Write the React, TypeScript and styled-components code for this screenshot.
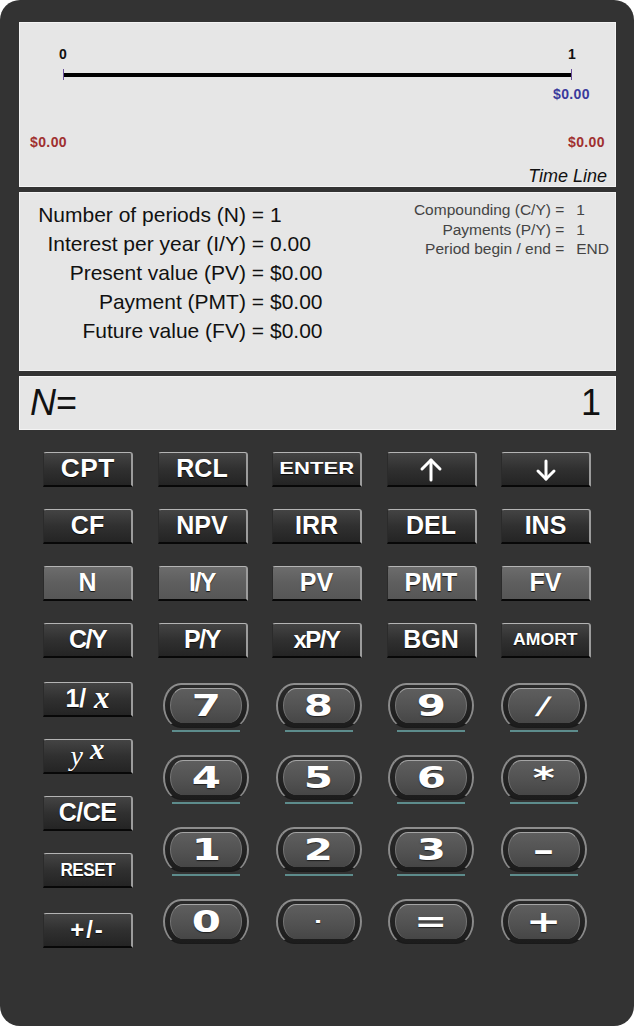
import React from 'react';
import styled, { createGlobalStyle } from 'styled-components';

const GlobalStyle = createGlobalStyle`
  html, body {
    margin: 0;
    padding: 0;
    background: #ffffff;
  }
  body {
    font-family: "Liberation Sans", Arial, sans-serif;
  }
`;

const Calculator = styled.div`
  width: 634px;
  height: 1026px;
  box-sizing: border-box;
  background: #333333;
  border-radius: 20px;
  padding: 22px 18px 0 19px;
  display: flex;
  flex-direction: column;
`;

const Screen = styled.div`
  display: flex;
  flex-direction: column;
  gap: 5px;
`;

const Panel = styled.div<{ $height: number }>`
  height: ${(p) => p.$height}px;
  box-sizing: border-box;
  background: #e6e6e6;
  border: 1px solid #f4f4f4;
  color: #111111;
`;

/* ---------- time line ---------- */

const TimelinePanel = styled(Panel)`
  display: flex;
  flex-direction: column;
`;

const TickRow = styled.div`
  display: flex;
  justify-content: space-between;
  width: 517px;
  margin: 24px 0 0 39px;
  font-size: 14px;
  line-height: 15px;
  font-weight: bold;
`;

const Tick = styled.span`
  width: 8px;
  text-align: center;
`;

const Axis = styled.div`
  position: relative;
  width: 509px;
  height: 4px;
  margin: 11px 0 0 43px;
  background: #000000;

  &::before,
  &::after {
    content: '';
    position: absolute;
    top: -4px;
    width: 1px;
    height: 11px;
    background: #6a4f9c;
  }
  &::before {
    left: 0;
  }
  &::after {
    right: 0;
  }
`;

const Amount = styled.span<{ $color: string }>`
  color: ${(p) => p.$color};
  font-size: 14px;
  line-height: 14px;
  font-weight: bold;
  letter-spacing: 0.4px;
`;

const FlowAmount = styled(Amount)`
  align-self: flex-end;
  margin: 10px 25px 0 0;
`;

const CashRow = styled.div`
  display: flex;
  justify-content: space-between;
  margin: 34px 10px 0 10px;
`;

const TimelineTitle = styled.div`
  align-self: flex-end;
  margin: 18px 8px 0 0;
  font-size: 18px;
  line-height: 18px;
  font-style: italic;
`;

/* ---------- values ---------- */

const InfoPanel = styled(Panel)`
  display: flex;
  justify-content: space-between;
  align-items: flex-start;
`;

const MainTable = styled.div`
  display: grid;
  grid-template-columns: 244px auto;
  padding-top: 7px;
  font-size: 21px;
  line-height: 29px;
  white-space: nowrap;
`;

const MainLabel = styled.span`
  text-align: right;
`;

const MainValue = styled.span`
  padding-left: 6px;
`;

const SideTable = styled.div`
  display: grid;
  grid-template-columns: auto auto;
  column-gap: 12px;
  margin: 7px 6px 0 0;
  font-size: 15.5px;
  line-height: 19.5px;
  color: #444444;
  white-space: nowrap;
`;

const SideLabel = styled.span`
  text-align: right;
`;

/* ---------- entry display ---------- */

const EntryPanel = styled(Panel)`
  display: flex;
  align-items: center;
  justify-content: space-between;
  padding: 0 14px 0 10px;
  font-size: 36px;
  line-height: 36px;
`;

const Variable = styled.span`
  font-style: italic;
`;

/* ---------- keys ---------- */

const Keypad = styled.div`
  margin-top: 22px;
  padding-left: 24px;
  display: flex;
  flex-direction: column;
  gap: 24px;
`;

const FunctionGrid = styled.div`
  display: grid;
  grid-template-columns: repeat(5, 90px);
  grid-auto-rows: 35px;
  column-gap: 24.5px;
  row-gap: 22px;
`;

const LowerArea = styled.div`
  display: flex;
  align-items: flex-start;
  gap: 30px;
`;

const SideColumn = styled.div`
  display: flex;
  flex-direction: column;
  gap: 22px;

  & > :last-child {
    margin-top: 3px;
  }
`;

const FuncKey = styled.button<{ $light?: boolean }>`
  width: 90px;
  height: 35px;
  box-sizing: border-box;
  padding: 0 0 1px;
  margin: 0;
  border-style: solid;
  border-width: 1px 2px 2px 1px;
  border-color: #b4b4b4 #9c9c9c #080808 #2b2b2b;
  border-radius: 3px 3px 0 0;
  background: ${(p) =>
    p.$light
      ? 'linear-gradient(#6c6c6c, #5e5e5e 50%, #565656)'
      : 'linear-gradient(#444444, #303030 50%, #242424)'};
  color: #ffffff;
  display: flex;
  align-items: center;
  justify-content: center;
  font-family: "Liberation Sans", Arial, sans-serif;
  font-weight: bold;
  text-shadow: 0 1px 1px rgba(0, 0, 0, 0.8);
  cursor: pointer;
`;

const KeyText = styled.span<{ $size?: number; $stretch?: number; $spacing?: number }>`
  display: inline-block;
  font-size: ${(p) => p.$size ?? 25}px;
  letter-spacing: ${(p) => p.$spacing ?? 0}px;
  transform: scaleX(${(p) => p.$stretch ?? 1});
  line-height: 1;
`;

const MathVar = styled.span<{ $size: number; $bold?: boolean; $raise?: number }>`
  font-family: "Liberation Serif", "Times New Roman", serif;
  font-style: italic;
  font-weight: ${(p) => (p.$bold ? 'bold' : 'normal')};
  font-size: ${(p) => p.$size}px;
  position: relative;
  top: ${(p) => -(p.$raise ?? 0)}px;
  line-height: 1;
`;

const NumberGrid = styled.div`
  display: grid;
  grid-template-columns: repeat(4, 86px);
  column-gap: 26.5px;
  row-gap: 23px;
  margin-top: 1px;
`;

const NumCell = styled.div`
  display: flex;
  flex-direction: column;
`;

const NumKey = styled.button`
  width: 86px;
  height: 45px;
  box-sizing: border-box;
  margin: 0;
  padding: 3px 5px 4px;
  border-style: solid;
  border-width: 2px 2px 1px;
  border-color: #8e8e8e #8a8a8a #1a1a1a;
  border-radius: 18px / 50%;
  background: linear-gradient(#2a2a2a, #1c1c1c);
  display: flex;
  cursor: pointer;
`;

const NumFace = styled.span`
  flex: 1;
  box-sizing: border-box;
  border-radius: 13px / 50%;
  border-top: 1px solid #a4a4a4;
  border-left: 1px solid #777777;
  border-right: 1px solid #777777;
  background: linear-gradient(#5e5e5e, #525252 55%, #464646);
  display: flex;
  align-items: center;
  justify-content: center;
  color: #ffffff;
  font-family: "DejaVu Sans", "Liberation Sans", sans-serif;
  font-weight: bold;
`;

const Glyph = styled.span<{ $size?: number; $skew?: number }>`
  display: inline-block;
  font-size: ${(p) => p.$size ?? 30}px;
  line-height: 1;
  transform: scaleX(1.4) skewX(${(p) => p.$skew ?? 0}deg);
  text-shadow: 0 1px 1px rgba(0, 0, 0, 0.6);
`;

const KeyUnderline = styled.span<{ $show: boolean }>`
  height: 2px;
  margin: 2px 9px 0;
  background: ${(p) => (p.$show ? '#5d8c8c' : 'transparent')};
`;

const Arrow = ({ down }: { down?: boolean }) => (
  <svg width="26" height="26" viewBox="0 0 26 26" style={{ marginTop: down ? 4 : 2 }}>
    <g fill="none" stroke="#ffffff" strokeWidth="3" strokeLinecap="round" strokeLinejoin="round">
      {down ? (
        <>
          <path d="M13 3V21" />
          <path d="M5 13L13 21L21 13" />
        </>
      ) : (
        <>
          <path d="M13 23V3" />
          <path d="M4 12L13 3L22 12" />
        </>
      )}
    </g>
  </svg>
);

type FKey = { text: React.ReactNode; light?: boolean };

const t = (s: string, size?: number, stretch?: number, spacing?: number) => (
  <KeyText $size={size} $stretch={stretch} $spacing={spacing}>
    {s}
  </KeyText>
);

const functionKeys: FKey[] = [
  { text: t('CPT', 25, 1.05, 0.5) },
  { text: t('RCL', 25) },
  { text: t('ENTER', 17, 1.3) },
  { text: <Arrow /> },
  { text: <Arrow down /> },
  { text: t('CF', 25) },
  { text: t('NPV', 25) },
  { text: t('IRR', 25) },
  { text: t('DEL', 25) },
  { text: t('INS', 25) },
  { text: t('N', 25), light: true },
  { text: t('I/Y', 25, 1, -1.5), light: true },
  { text: t('PV', 25), light: true },
  { text: t('PMT', 25), light: true },
  { text: t('FV', 25), light: true },
  { text: t('C/Y', 25, 1, -1.5) },
  { text: t('P/Y', 25, 1, -1.5) },
  { text: t('xP/Y', 24, 1, -1.5) },
  { text: t('BGN', 25) },
  { text: t('AMORT', 16, 1.1) },
];

const sideKeys: FKey[] = [
  {
    text: (
      <>
        {t('1/', 25)}
        <MathVar $size={31} $bold $raise={1}>
          {'\u00a0x'}
        </MathVar>
      </>
    ),
  },
  {
    text: (
      <>
        <MathVar $size={28}>y</MathVar>
        <MathVar $size={29} $bold $raise={6}>
          {'\u00a0x'}
        </MathVar>
      </>
    ),
  },
  { text: t('C/CE', 25, 1, -0.5) },
  { text: t('RESET', 18, 0.95, -0.5) },
  { text: t('+/-', 24, 1, 2) },
];

const numberKeys: { glyph: string; size?: number; skew?: number }[] = [
  { glyph: '7' },
  { glyph: '8' },
  { glyph: '9' },
  { glyph: '/', size: 24, skew: -10 },
  { glyph: '4' },
  { glyph: '5' },
  { glyph: '6' },
  { glyph: '*', size: 30 },
  { glyph: '1' },
  { glyph: '2' },
  { glyph: '3' },
  { glyph: '–', size: 30 },
  { glyph: '0' },
  { glyph: '·', size: 16 },
  { glyph: '=', size: 28 },
  { glyph: '+', size: 30 },
];

const mainRows = [
  ['Number of periods (N) =', '1'],
  ['Interest per year (I/Y) =', '0.00'],
  ['Present value (PV) =', '$0.00'],
  ['Payment (PMT) =', '$0.00'],
  ['Future value (FV) =', '$0.00'],
];

const sideRows = [
  ['Compounding (C/Y) =', '1'],
  ['Payments (P/Y) =', '1'],
  ['Period begin / end =', 'END'],
];

export default function App() {
  return (
    <>
      <GlobalStyle />
      <Calculator>
        <Screen>
          <TimelinePanel $height={165}>
            <TickRow>
              <Tick>0</Tick>
              <Tick>1</Tick>
            </TickRow>
            <Axis />
            <FlowAmount $color="#3a3a9c">$0.00</FlowAmount>
            <CashRow>
              <Amount $color="#a03030">$0.00</Amount>
              <Amount $color="#a03030">$0.00</Amount>
            </CashRow>
            <TimelineTitle>Time Line</TimelineTitle>
          </TimelinePanel>

          <InfoPanel $height={179}>
            <MainTable>
              {mainRows.map(([label, value]) => (
                <React.Fragment key={label}>
                  <MainLabel>{label}</MainLabel>
                  <MainValue>{value}</MainValue>
                </React.Fragment>
              ))}
            </MainTable>
            <SideTable>
              {sideRows.map(([label, value]) => (
                <React.Fragment key={label}>
                  <SideLabel>{label}</SideLabel>
                  <span>{value}</span>
                </React.Fragment>
              ))}
            </SideTable>
          </InfoPanel>

          <EntryPanel $height={54}>
            <span>
              <Variable>N</Variable>=
            </span>
            <span>1</span>
          </EntryPanel>
        </Screen>

        <Keypad>
          <FunctionGrid>
            {functionKeys.map((k, i) => (
              <FuncKey key={i} $light={k.light}>
                {k.text}
              </FuncKey>
            ))}
          </FunctionGrid>

          <LowerArea>
            <SideColumn>
              {sideKeys.map((k, i) => (
                <FuncKey key={i}>{k.text}</FuncKey>
              ))}
            </SideColumn>
            <NumberGrid>
              {numberKeys.map((k, i) => (
                <NumCell key={i}>
                  <NumKey>
                    <NumFace>
                      <Glyph $size={k.size} $skew={k.skew}>
                        {k.glyph}
                      </Glyph>
                    </NumFace>
                  </NumKey>
                  <KeyUnderline $show={i < 12} />
                </NumCell>
              ))}
            </NumberGrid>
          </LowerArea>
        </Keypad>
      </Calculator>
    </>
  );
}
